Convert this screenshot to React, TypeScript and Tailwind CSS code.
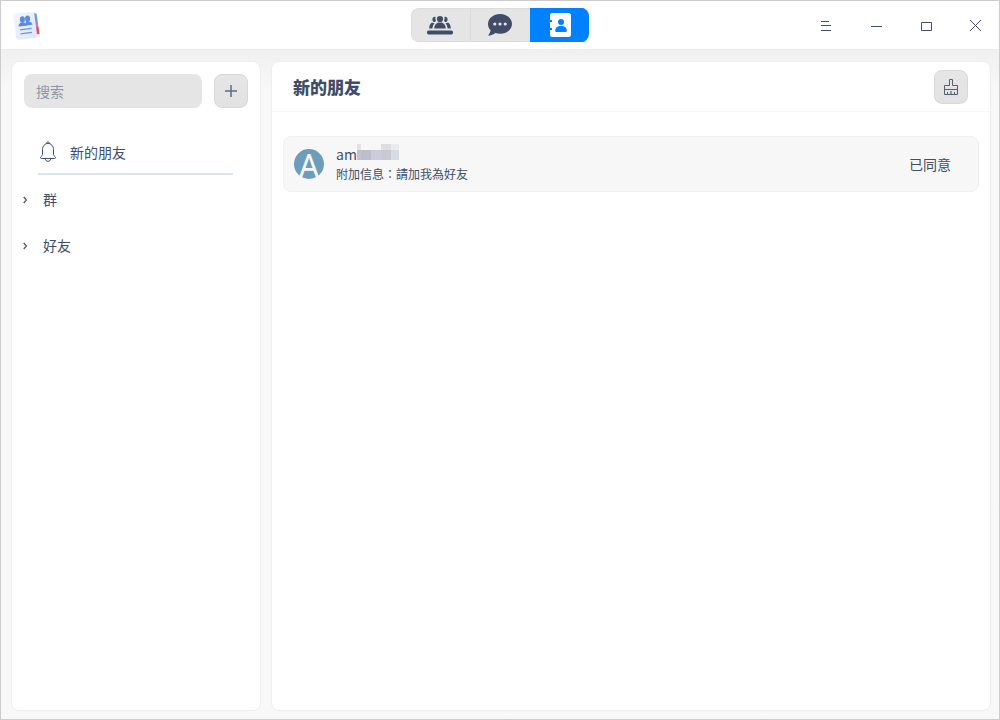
import React, { useState } from 'react';

type TabId = 'groups' | 'chats' | 'contacts';

interface FriendRequest {
  id: number;
  initial: string;
  name: string;
  message: string;
  status: string;
}

const requests: FriendRequest[] = [
  { id: 1, initial: 'A', name: 'am', message: '附加信息：請加我為好友', status: '已同意' },
];

const categories = ['群', '好友'];

function AppLogo() {
  return (
    <svg width="30" height="34" viewBox="0 0 30 34" aria-hidden="true">
      <defs>
        <linearGradient id="page" x1="0" y1="0" x2="1" y2="1">
          <stop offset="0" stopColor="#f3f6fd" />
          <stop offset="1" stopColor="#dde5f8" />
        </linearGradient>
      </defs>
      <path d="M21 5 L24.5 5.5 L25.5 12 L22 12Z" fill="#5a9de0" />
      <path d="M22 12 L25.5 12 L26.5 19 L23 19Z" fill="#b07fd0" />
      <path d="M23 19 L26.5 19 L27.5 26 L24 26.5Z" fill="#f0484f" />
      <path
        d="M3 5.6 L20 4 Q22 3.8 22.3 5.8 L25.2 27.6 Q25.5 29.4 23.6 29.7 L6.6 31.8 Q4.6 32 4.3 30 L1.2 8 Q1 5.8 3 5.6Z"
        fill="url(#page)"
      />
      <g fill="#5b8be0">
        <ellipse cx="10.4" cy="11.4" rx="2.5" ry="3.2" />
        <ellipse cx="15.6" cy="10.8" rx="2.5" ry="3.2" />
        <path d="M13.2 17.4 L14 13.4 H17 Q20.4 14 20.6 16.8Z" />
        <path d="M6.4 18.6 Q6.8 14.4 10.6 14.2 Q14.2 14.2 15 17.8Z" />
      </g>
      <path d="M8 21.8 L19.6 20.4 M8.5 25.8 L20 24.4" stroke="#6a96e4" strokeWidth="1.3" />
    </svg>
  );
}

function GroupIcon() {
  return (
    <svg width="28" height="20" viewBox="0 0 28 20" fill="currentColor" aria-hidden="true">
      <circle cx="13" cy="4" r="3.1" />
      <path d="M7.2 13.4 C7.4 9.6 9.8 7.6 13 7.6 C16.2 7.6 18.6 9.6 18.8 13.4Z" />
      <path d="M8.6 2 C7 1.4 5.4 2.6 5.4 4.4 C5.4 6 6.4 7.2 7.8 7 L9 6 C8.4 4.6 8.2 3.4 8.6 2Z" />
      <path d="M17.4 2 C19 1.4 20.6 2.6 20.6 4.4 C20.6 6 19.6 7.2 18.2 7 L17 6 C17.6 4.6 17.8 3.4 17.4 2Z" />
      <path d="M5 7.6 C3.2 8.6 2.2 10.8 2.2 13.4 H5.4 C5.6 11.2 6.4 9.4 7.6 8.2 C6.6 8.2 5.6 8 5 7.6Z" />
      <path d="M21 7.6 C22.8 8.6 23.8 10.8 23.8 13.4 H20.6 C20.4 11.2 19.6 9.4 18.4 8.2 C19.4 8.2 20.4 8 21 7.6Z" />
      <rect x="0" y="15.4" width="26" height="4" rx="1.6" />
    </svg>
  );
}

function ChatIcon() {
  return (
    <svg width="24" height="22" viewBox="0 0 24 22" aria-hidden="true">
      <path
        d="M12 0 C5.4 0 0 4.4 0 10 C0 12.4 1 14.6 2.6 16.2 C2.2 18.4 1.2 20 0 21.6 C3 21.6 5.6 20.4 7.4 19 C8.8 19.6 10.4 19.8 12 19.8 C18.6 19.8 24 15.4 24 10 C24 4.4 18.6 0 12 0Z"
        fill="currentColor"
      />
      <g fill="#e5e5e5">
        <circle cx="6.8" cy="10" r="1.6" />
        <circle cx="12" cy="10" r="1.6" />
        <circle cx="17.2" cy="10" r="1.6" />
      </g>
    </svg>
  );
}

function ContactIcon() {
  return (
    <svg width="22" height="24" viewBox="0 0 22 24" aria-hidden="true">
      <path
        d="M3 0 H19.5 Q22 0 22 2.5 V21.5 Q22 24 19.5 24 H3 Q1 24 1 22 V17 H3 V15 H1 V9 H3 V7 H1 V2 Q1 0 3 0Z"
        fill="currentColor"
      />
      <g fill="#0081ff">
        <circle cx="12" cy="9" r="3" />
        <path d="M6.2 18 C6.2 14.6 8.2 13 12 13 C15.8 13 17.8 14.6 17.8 18 Q17.8 19 16.8 19 H7.2 Q6.2 19 6.2 18Z" />
      </g>
    </svg>
  );
}

function BellIcon() {
  return (
    <svg width="18" height="22" viewBox="0 0 18 22" fill="none" stroke="currentColor" aria-hidden="true">
      <path d="M7.2 2.6 C7.2 .4 10.8 .4 10.8 2.6" />
      <path d="M3.5 11 V8.5 C3.5 5 6 2.5 9 2.5 C12 2.5 14.5 5 14.5 8.5 V13.5 C14.5 14.5 15.4 15 16.2 15.8 C16.8 16.6 16.6 17.5 15.6 17.5 H2.4 C1.4 17.5 1.2 16.6 1.8 15.8 C2.6 15 3.5 14.5 3.5 13.5Z" />
      <path d="M6.2 17.8 C6.6 21.2 11.4 21.2 11.8 17.8" />
    </svg>
  );
}

function BrushIcon() {
  return (
    <svg width="16" height="18" viewBox="0 0 16 18" fill="none" stroke="#566073" aria-hidden="true">
      <path d="M6.5 7.5 V1.5 H9.5 V7.5" />
      <path d="M6.5 7.5 H1.5 V16.5 H14.5 V7.5 H9.5" />
      <path d="M1.5 11.5 H14.5 M4.5 14 V16 M11.5 14 V16" />
      <path d="M8 13 V16" strokeWidth="2" strokeOpacity=".6" />
    </svg>
  );
}

// Blocks that hide the rest of an account name
function MaskedName() {
  return (
    <svg width="42" height="16" viewBox="0 0 42 16" className="mb-1" shapeRendering="crispEdges" aria-hidden="true">
      <rect x="0" y="0" width="4" height="6" fill="#e2e2e5" />
      <rect x="24" y="0" width="10" height="6" fill="#dedfe2" />
      <rect x="34" y="0" width="8" height="6" fill="#e9ebef" />
      <rect x="0" y="6" width="4" height="10" fill="#c3c2cc" />
      <rect x="4" y="6" width="10" height="10" fill="#bdbec9" />
      <rect x="14" y="6" width="10" height="10" fill="#cacdd7" />
      <rect x="24" y="6" width="10" height="10" fill="#c9cad0" />
      <rect x="34" y="6" width="8" height="10" fill="#d6dce0" />
    </svg>
  );
}

const windowControls = [
  { label: '菜单', path: 'M22 20.5 H30 M22 24.5 H32 M22 29.5 H32' },
  { label: '最小化', path: 'M22 25.5 H33' },
  { label: '最大化', path: 'M22.5 21.5 H32.5 V29.5 H22.5Z' },
  { label: '关闭', path: 'M21 19 L32 30 M32 19 L21 30' },
];

const tabs: { id: TabId; label: string; icon: React.ReactNode }[] = [
  { id: 'groups', label: '群组', icon: <GroupIcon /> },
  { id: 'chats', label: '消息', icon: <ChatIcon /> },
  { id: 'contacts', label: '联系人', icon: <ContactIcon /> },
];

function TitleBar() {
  const [active, setActive] = useState<TabId>('contacts');

  return (
    <header className="grid h-[49px] grid-cols-[1fr_auto_1fr] items-center border-b border-[#ededed] bg-white">
      <div className="pl-[11px]">
        <AppLogo />
      </div>
      <nav className="grid h-[34px] w-[178px] grid-cols-3 overflow-hidden rounded-lg bg-[#e5e5e5]">
        {tabs.map((tab) => (
          <button
            key={tab.id}
            aria-label={tab.label}
            onClick={() => setActive(tab.id)}
            className={`flex items-center justify-center border-y border-l ${
              active === tab.id
                ? 'border-[#0081ff] bg-[#0081ff] text-white'
                : 'border-[#dcdcdc] text-[#414d68] first:rounded-l-lg'
            }`}
          >
            {tab.icon}
          </button>
        ))}
      </nav>
      <div className="flex justify-end">
        {windowControls.map((control) => (
          <button key={control.label} aria-label={control.label} className="hover:bg-gray-100">
            <svg width="50" height="48" viewBox="0 0 50 48" fill="none" stroke="#414d68" aria-hidden="true">
              <path d={control.path} />
            </svg>
          </button>
        ))}
      </div>
    </header>
  );
}

function SquareButton({ label, children }: { label: string; children: React.ReactNode }) {
  return (
    <button
      aria-label={label}
      className="flex size-[34px] shrink-0 items-center justify-center rounded-lg border border-[#d8d8d8] bg-linear-to-b from-[#e6e6e6] to-[#e2e2e2]"
    >
      {children}
    </button>
  );
}

function Sidebar() {
  return (
    <aside className="w-[250px] shrink-0 rounded-lg border border-[#eeeeee] bg-white">
      <div className="flex gap-3 p-3">
        <input
          type="search"
          aria-label="搜索"
          placeholder="搜索"
          className="h-[34px] min-w-0 flex-1 rounded-lg bg-[#e5e5e5] px-3 text-sm outline-none placeholder:text-[#8f95a5]"
        />
        <SquareButton label="添加">
          <svg width="14" height="14" viewBox="0 0 14 14" stroke="#5f6b7e" strokeWidth="1.5" aria-hidden="true">
            <path d="M7 1 V13 M1 7 H13" />
          </svg>
        </SquareButton>
      </div>

      <button className="mx-[26px] mt-[10px] flex h-[45px] w-[195px] items-center gap-[13px] border-b-2 border-[#d9e6ea] pl-px text-sm">
        <BellIcon />
        <span>新的朋友</span>
      </button>

      <ul className="mt-px">
        {categories.map((category) => (
          <li key={category}>
            <button className="flex h-[46px] w-full items-center gap-4 pl-[11px] text-sm">
              <svg width="4" height="10" viewBox="0 0 4 10" fill="none" stroke="currentColor" strokeWidth="1.2" aria-hidden="true">
                <path d="M.7 3 L3.5 6 L.7 9" />
              </svg>
              <span>{category}</span>
            </button>
          </li>
        ))}
      </ul>
    </aside>
  );
}

function RequestCard({ request }: { request: FriendRequest }) {
  return (
    <li className="flex h-14 items-center rounded-lg border border-[#f0f0f0] bg-[#f7f7f7] pl-[10px] pr-[27px]">
      <div className="flex size-[30px] items-center justify-center rounded-full bg-[#6d9dba] pt-1 font-['Noto_Sans',sans-serif] text-[32px] leading-none text-[#f7f7f7]">
        {request.initial}
      </div>
      <div className="ml-3 flex-1">
        <div className="flex h-5 items-center text-sm leading-5">
          <span>{request.name}</span>
          <MaskedName />
        </div>
        <p lang="zh-Hant" className="font-['Noto_Sans_CJK_TC',sans-serif] text-xs leading-5">
          {request.message}
        </p>
      </div>
      <span className="text-sm">{request.status}</span>
    </li>
  );
}

export default function App() {
  return (
    <div className="flex min-h-screen flex-col border border-[#cccccc] bg-[#f8f8f8] font-['Noto_Sans_CJK_SC','Noto_Sans',sans-serif] text-[#414d68]">
      <TitleBar />
      <main className="flex flex-1 gap-[10px] bg-linear-to-b from-[#f0f0f0] to-[#f8f8f8] to-[40px] pb-2 pl-[10px] pr-2 pt-[11px]">
        <Sidebar />
        <section className="min-w-0 flex-1 rounded-lg border border-[#eeeeee] bg-white">
          <div className="flex h-[50px] items-center justify-between border-b border-[#f6f6f6] pl-[21px] pr-[22px]">
            <h1 className="text-[17px] font-black">新的朋友</h1>
            <SquareButton label="清空">
              <BrushIcon />
            </SquareButton>
          </div>
          <ul className="px-[11px] pt-6">
            {requests.map((request) => (
              <RequestCard key={request.id} request={request} />
            ))}
          </ul>
        </section>
      </main>
    </div>
  );
}
